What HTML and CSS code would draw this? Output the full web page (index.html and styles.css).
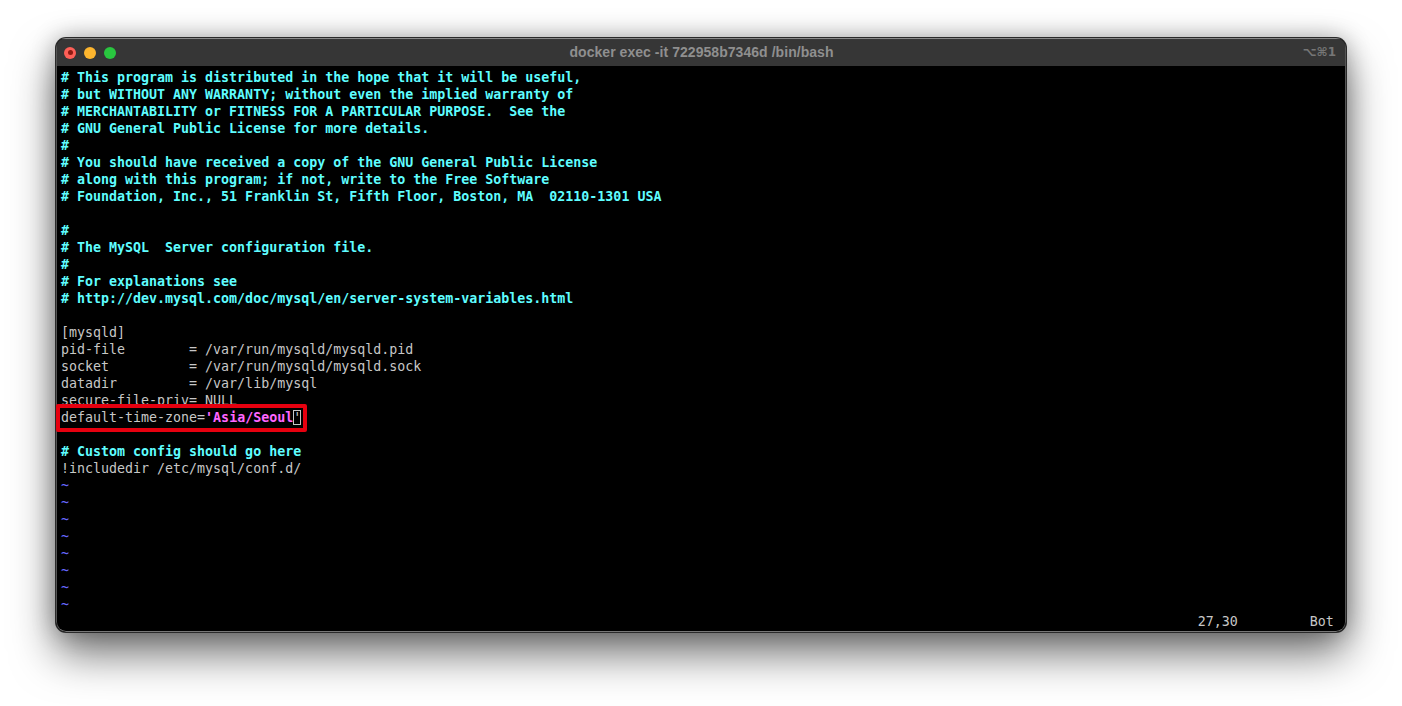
FILE: index.html
```html
<!DOCTYPE html>
<html lang="en">
<head>
<meta charset="utf-8">
<title>docker exec -it 722958b7346d /bin/bash</title>
<link rel="stylesheet" href="styles.css">
</head>
<body>
<main class="window">
  <header class="titlebar">
    <div class="lights">
      <span class="light red"></span>
      <span class="light yellow"></span>
      <span class="light green"></span>
    </div>
    <div class="title">docker exec -it 722958b7346d /bin/bash</div>
    <div class="shortcut">⌥⌘1</div>
  </header>
  <section class="terminal">
<pre class="screen"><span class="c"># This program is distributed in the hope that it will be useful,
# but WITHOUT ANY WARRANTY; without even the implied warranty of
# MERCHANTABILITY or FITNESS FOR A PARTICULAR PURPOSE.  See the
# GNU General Public License for more details.
#
# You should have received a copy of the GNU General Public License
# along with this program; if not, write to the Free Software
# Foundation, Inc., 51 Franklin St, Fifth Floor, Boston, MA  02110-1301 USA

#
# The MySQL  Server configuration file.
#
# For explanations see
# http://dev.mysql.com/doc/mysql/en/server-system-variables.html</span>

[mysqld]
pid-file        = /var/run/mysqld/mysqld.pid
socket          = /var/run/mysqld/mysqld.sock
datadir         = /var/lib/mysql
secure-file-priv= NULL
<span class="mark">default-time-zone=<span class="s">'Asia/Seoul</span><span class="cursor">'</span><span class="box"></span></span>

<span class="c"># Custom config should go here</span>
!includedir /etc/mysql/conf.d/
<span class="t">~
~
~
~
~
~
~
~</span>
                                                                                                                                              27,30         Bot</pre>
  </section>
</main>
</body>
</html>
```
FILE: styles.css
```css
* { box-sizing: border-box; }
html, body { margin: 0; height: 100%; overflow: hidden; background: #fff; }
body { padding: 38px 56px 74px; }
.window {
  height: 594px;
  display: flex;
  flex-direction: column;
  border-radius: 10px;
  overflow: hidden;
  background: #000;
  box-shadow: 0 0 0 1px #2a2a2a, 0 22px 44px rgba(0,0,0,.55), 0 0 24px rgba(0,0,0,.3);
}
.titlebar {
  flex: 0 0 28px;
  display: grid;
  grid-template-columns: 1fr auto 1fr;
  align-items: center;
  padding: 0 9px 2px 7px;
  background: #363636;
  border-top: 1px solid #8a8a8a;
  border-left: 1px solid #555;
  border-right: 1px solid #555;
}
.lights { display: flex; gap: 8px; padding-top: 2px; }
.light { width: 12px; height: 12px; border-radius: 50%; display: block; position: relative; }
.red { background: #fd5f57; }
.red::after { content: ""; position: absolute; left: 3.5px; top: 3.5px; width: 5px; height: 5px; border-radius: 50%; background: #8e1a12; }
.yellow { background: #fdb52e; }
.green { background: #29c63f; }
.title {
  font: 700 14px/1 "Liberation Sans", Arial, sans-serif;
  letter-spacing: 0.05px;
  padding-left: 3px;
  color: #8f8f8f;
  white-space: nowrap;
}
.shortcut {
  justify-self: end;
  font: 700 12px/1 "DejaVu Sans", sans-serif;
  color: #767676;
}
.terminal {
  flex: 1;
  min-height: 0;
  padding: 3px 4px 0;
  border-left: 1px solid #555;
  border-right: 1px solid #555;
  border-bottom: 1px solid #777;
  border-radius: 0 0 10px 10px;
  background: #000;
}
.screen {
  margin: 0;
  font: 13.3px/17px "DejaVu Sans Mono", monospace;
  color: #c7c7c7;
}
.c { color: #5ffdff; font-weight: 700; }
.s { color: #ff66ff; font-weight: 700; }
.t { color: #6767ff; }
.mark { position: relative; }
.cursor { outline: 1px solid #c7c7c7; outline-offset: -1px; color: #c7c7c7; }
.box {
  position: absolute;
  left: -5px;
  top: -6px;
  width: 251px;
  height: 28px;
  border: 4px solid #e6000f;
  border-radius: 2px;
}
```
